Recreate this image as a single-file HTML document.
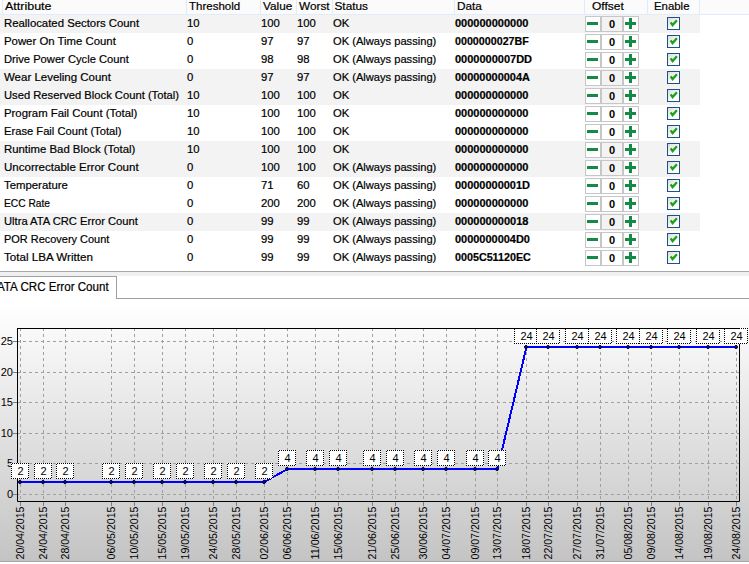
<!DOCTYPE html><html><head><meta charset="utf-8"><style>
html,body{margin:0;padding:0;}
body{width:749px;height:564px;overflow:hidden;position:relative;background:#fff;font-family:"Liberation Sans",sans-serif;color:#000;}
.a{position:absolute;}
.t{position:absolute;font-size:11.3px;line-height:14px;white-space:nowrap;-webkit-text-stroke:0.2px #000;}
.h{position:absolute;font-size:11.8px;line-height:14px;white-space:nowrap;-webkit-text-stroke:0.2px #000;}
.b{font-weight:bold;font-size:11px;}
.sep{position:absolute;top:0;width:1px;height:14px;background:#e2ebf8;}
.row{position:absolute;left:0;width:700px;height:18px;}
.g{background:#f3f3f3;}
.cell{position:absolute;height:16px;border:1px solid #c6c6c6;box-sizing:border-box;background:#fff;}
.mid{background:transparent;font-weight:bold;font-size:11px;text-align:center;line-height:14px;}
.cb{position:absolute;width:13px;height:13px;box-sizing:border-box;border:1px solid #1f5088;background:linear-gradient(135deg,#dcdcdc,#fff 70%);}
</style></head><body>

<div class="a" style="left:0;top:0;width:749px;height:14px;background:#fbfbfb"></div>
<div class="sep" style="left:2px"></div>
<div class="sep" style="left:186px"></div>
<div class="sep" style="left:260px"></div>
<div class="sep" style="left:296px"></div>
<div class="sep" style="left:332px"></div>
<div class="sep" style="left:454px"></div>
<div class="sep" style="left:584px"></div>
<div class="sep" style="left:647px"></div>
<div class="sep" style="left:699px"></div>
<div class="a" style="left:0;top:14px;width:749px;height:1px;background:#e2ebf8"></div>
<div class="h" style="left:5px;top:-1px;transform:scaleX(1.058);transform-origin:0 0">Attribute</div>
<div class="h" style="left:189px;top:-1px;transform:scaleX(0.976);transform-origin:0 0">Threshold</div>
<div class="h" style="left:263px;top:-1px">Value</div>
<div class="h" style="left:299px;top:-1px">Worst</div>
<div class="h" style="left:334.5px;top:-1px">Status</div>
<div class="h" style="left:457px;top:-1px">Data</div>
<div class="h" style="left:591.5px;top:-1px;transform:scaleX(1.02);transform-origin:0 0">Offset</div>
<div class="h" style="left:654px;top:-1px;transform:scaleX(0.966);transform-origin:0 0">Enable</div>
<div class="row g" style="top:15px"></div>
<div class="t" style="left:3.5px;top:16px;transform:scaleX(1.0052);transform-origin:0 0">Reallocated Sectors Count</div>
<div class="t" style="left:187px;top:16px">10</div>
<div class="t" style="left:261px;top:16px">100</div>
<div class="t" style="left:297px;top:16px">100</div>
<div class="t" style="left:333px;top:16px">OK</div>
<div class="t b" style="left:455px;top:16px">000000000000</div>
<div class="cell" style="left:585px;top:16px;width:16px"><div class="a" style="left:1px;top:5px;width:11px;height:3px;background:#148a46"></div></div>
<div class="cell mid" style="left:601px;top:16px;width:22px;background:#f3f3f3">0</div>
<div class="cell" style="left:623px;top:16px;width:16px"><div class="a" style="left:1px;top:5px;width:11px;height:3px;background:#148a46"></div><div class="a" style="left:5px;top:1px;width:3px;height:11px;background:#148a46"></div></div>
<div class="cb" style="left:667px;top:17px"><svg class="a" style="left:0;top:0" width="11" height="11" viewBox="0 0 11 11"><path d="M2.7 4.3 L4.6 7.1 L8.9 2.2" fill="none" stroke="#17a317" stroke-width="2.2"/></svg></div>
<div class="row" style="top:33px"></div>
<div class="t" style="left:3.5px;top:34px;transform:scaleX(1.0063);transform-origin:0 0">Power On Time Count</div>
<div class="t" style="left:187px;top:34px">0</div>
<div class="t" style="left:261px;top:34px">97</div>
<div class="t" style="left:297px;top:34px">97</div>
<div class="t" style="left:333px;top:34px;transform:scaleX(0.9854);transform-origin:0 0">OK (Always passing)</div>
<div class="t b" style="left:455px;top:34px;transform:scaleX(0.9732);transform-origin:0 0">0000000027BF</div>
<div class="cell" style="left:585px;top:34px;width:16px"><div class="a" style="left:1px;top:5px;width:11px;height:3px;background:#148a46"></div></div>
<div class="cell mid" style="left:601px;top:34px;width:22px;background:#fff">0</div>
<div class="cell" style="left:623px;top:34px;width:16px"><div class="a" style="left:1px;top:5px;width:11px;height:3px;background:#148a46"></div><div class="a" style="left:5px;top:1px;width:3px;height:11px;background:#148a46"></div></div>
<div class="cb" style="left:667px;top:35px"><svg class="a" style="left:0;top:0" width="11" height="11" viewBox="0 0 11 11"><path d="M2.7 4.3 L4.6 7.1 L8.9 2.2" fill="none" stroke="#17a317" stroke-width="2.2"/></svg></div>
<div class="row" style="top:51px"></div>
<div class="t" style="left:3.5px;top:52px;transform:scaleX(0.9888);transform-origin:0 0">Drive Power Cycle Count</div>
<div class="t" style="left:187px;top:52px">0</div>
<div class="t" style="left:261px;top:52px">98</div>
<div class="t" style="left:297px;top:52px">98</div>
<div class="t" style="left:333px;top:52px;transform:scaleX(0.9854);transform-origin:0 0">OK (Always passing)</div>
<div class="t b" style="left:455px;top:52px">0000000007DD</div>
<div class="cell" style="left:585px;top:52px;width:16px"><div class="a" style="left:1px;top:5px;width:11px;height:3px;background:#148a46"></div></div>
<div class="cell mid" style="left:601px;top:52px;width:22px;background:#fff">0</div>
<div class="cell" style="left:623px;top:52px;width:16px"><div class="a" style="left:1px;top:5px;width:11px;height:3px;background:#148a46"></div><div class="a" style="left:5px;top:1px;width:3px;height:11px;background:#148a46"></div></div>
<div class="cb" style="left:667px;top:53px"><svg class="a" style="left:0;top:0" width="11" height="11" viewBox="0 0 11 11"><path d="M2.7 4.3 L4.6 7.1 L8.9 2.2" fill="none" stroke="#17a317" stroke-width="2.2"/></svg></div>
<div class="row g" style="top:69px"></div>
<div class="t" style="left:3.5px;top:70px;transform:scaleX(1.0153);transform-origin:0 0">Wear Leveling Count</div>
<div class="t" style="left:187px;top:70px">0</div>
<div class="t" style="left:261px;top:70px">97</div>
<div class="t" style="left:297px;top:70px">97</div>
<div class="t" style="left:333px;top:70px;transform:scaleX(0.9854);transform-origin:0 0">OK (Always passing)</div>
<div class="t b" style="left:455px;top:70px;transform:scaleX(0.9959);transform-origin:0 0">00000000004A</div>
<div class="cell" style="left:585px;top:70px;width:16px"><div class="a" style="left:1px;top:5px;width:11px;height:3px;background:#148a46"></div></div>
<div class="cell mid" style="left:601px;top:70px;width:22px;background:#f3f3f3">0</div>
<div class="cell" style="left:623px;top:70px;width:16px"><div class="a" style="left:1px;top:5px;width:11px;height:3px;background:#148a46"></div><div class="a" style="left:5px;top:1px;width:3px;height:11px;background:#148a46"></div></div>
<div class="cb" style="left:667px;top:71px"><svg class="a" style="left:0;top:0" width="11" height="11" viewBox="0 0 11 11"><path d="M2.7 4.3 L4.6 7.1 L8.9 2.2" fill="none" stroke="#17a317" stroke-width="2.2"/></svg></div>
<div class="row g" style="top:87px"></div>
<div class="t" style="left:3.5px;top:88px;transform:scaleX(0.9920);transform-origin:0 0">Used Reserved Block Count (Total)</div>
<div class="t" style="left:187px;top:88px">10</div>
<div class="t" style="left:261px;top:88px">100</div>
<div class="t" style="left:297px;top:88px">100</div>
<div class="t" style="left:333px;top:88px">OK</div>
<div class="t b" style="left:455px;top:88px">000000000000</div>
<div class="cell" style="left:585px;top:88px;width:16px"><div class="a" style="left:1px;top:5px;width:11px;height:3px;background:#148a46"></div></div>
<div class="cell mid" style="left:601px;top:88px;width:22px;background:#f3f3f3">0</div>
<div class="cell" style="left:623px;top:88px;width:16px"><div class="a" style="left:1px;top:5px;width:11px;height:3px;background:#148a46"></div><div class="a" style="left:5px;top:1px;width:3px;height:11px;background:#148a46"></div></div>
<div class="cb" style="left:667px;top:89px"><svg class="a" style="left:0;top:0" width="11" height="11" viewBox="0 0 11 11"><path d="M2.7 4.3 L4.6 7.1 L8.9 2.2" fill="none" stroke="#17a317" stroke-width="2.2"/></svg></div>
<div class="row" style="top:105px"></div>
<div class="t" style="left:3.5px;top:106px;transform:scaleX(1.0068);transform-origin:0 0">Program Fail Count (Total)</div>
<div class="t" style="left:187px;top:106px">10</div>
<div class="t" style="left:261px;top:106px">100</div>
<div class="t" style="left:297px;top:106px">100</div>
<div class="t" style="left:333px;top:106px">OK</div>
<div class="t b" style="left:455px;top:106px">000000000000</div>
<div class="cell" style="left:585px;top:106px;width:16px"><div class="a" style="left:1px;top:5px;width:11px;height:3px;background:#148a46"></div></div>
<div class="cell mid" style="left:601px;top:106px;width:22px;background:#fff">0</div>
<div class="cell" style="left:623px;top:106px;width:16px"><div class="a" style="left:1px;top:5px;width:11px;height:3px;background:#148a46"></div><div class="a" style="left:5px;top:1px;width:3px;height:11px;background:#148a46"></div></div>
<div class="cb" style="left:667px;top:107px"><svg class="a" style="left:0;top:0" width="11" height="11" viewBox="0 0 11 11"><path d="M2.7 4.3 L4.6 7.1 L8.9 2.2" fill="none" stroke="#17a317" stroke-width="2.2"/></svg></div>
<div class="row" style="top:123px"></div>
<div class="t" style="left:3.5px;top:124px;transform:scaleX(0.9898);transform-origin:0 0">Erase Fail Count (Total)</div>
<div class="t" style="left:187px;top:124px">10</div>
<div class="t" style="left:261px;top:124px">100</div>
<div class="t" style="left:297px;top:124px">100</div>
<div class="t" style="left:333px;top:124px">OK</div>
<div class="t b" style="left:455px;top:124px">000000000000</div>
<div class="cell" style="left:585px;top:124px;width:16px"><div class="a" style="left:1px;top:5px;width:11px;height:3px;background:#148a46"></div></div>
<div class="cell mid" style="left:601px;top:124px;width:22px;background:#fff">0</div>
<div class="cell" style="left:623px;top:124px;width:16px"><div class="a" style="left:1px;top:5px;width:11px;height:3px;background:#148a46"></div><div class="a" style="left:5px;top:1px;width:3px;height:11px;background:#148a46"></div></div>
<div class="cb" style="left:667px;top:125px"><svg class="a" style="left:0;top:0" width="11" height="11" viewBox="0 0 11 11"><path d="M2.7 4.3 L4.6 7.1 L8.9 2.2" fill="none" stroke="#17a317" stroke-width="2.2"/></svg></div>
<div class="row g" style="top:141px"></div>
<div class="t" style="left:3.5px;top:142px;transform:scaleX(1.0062);transform-origin:0 0">Runtime Bad Block (Total)</div>
<div class="t" style="left:187px;top:142px">10</div>
<div class="t" style="left:261px;top:142px">100</div>
<div class="t" style="left:297px;top:142px">100</div>
<div class="t" style="left:333px;top:142px">OK</div>
<div class="t b" style="left:455px;top:142px">000000000000</div>
<div class="cell" style="left:585px;top:142px;width:16px"><div class="a" style="left:1px;top:5px;width:11px;height:3px;background:#148a46"></div></div>
<div class="cell mid" style="left:601px;top:142px;width:22px;background:#f3f3f3">0</div>
<div class="cell" style="left:623px;top:142px;width:16px"><div class="a" style="left:1px;top:5px;width:11px;height:3px;background:#148a46"></div><div class="a" style="left:5px;top:1px;width:3px;height:11px;background:#148a46"></div></div>
<div class="cb" style="left:667px;top:143px"><svg class="a" style="left:0;top:0" width="11" height="11" viewBox="0 0 11 11"><path d="M2.7 4.3 L4.6 7.1 L8.9 2.2" fill="none" stroke="#17a317" stroke-width="2.2"/></svg></div>
<div class="row g" style="top:159px"></div>
<div class="t" style="left:3.5px;top:160px;transform:scaleX(1.0213);transform-origin:0 0">Uncorrectable Error Count</div>
<div class="t" style="left:187px;top:160px">0</div>
<div class="t" style="left:261px;top:160px">100</div>
<div class="t" style="left:297px;top:160px">100</div>
<div class="t" style="left:333px;top:160px;transform:scaleX(0.9854);transform-origin:0 0">OK (Always passing)</div>
<div class="t b" style="left:455px;top:160px">000000000000</div>
<div class="cell" style="left:585px;top:160px;width:16px"><div class="a" style="left:1px;top:5px;width:11px;height:3px;background:#148a46"></div></div>
<div class="cell mid" style="left:601px;top:160px;width:22px;background:#f3f3f3">0</div>
<div class="cell" style="left:623px;top:160px;width:16px"><div class="a" style="left:1px;top:5px;width:11px;height:3px;background:#148a46"></div><div class="a" style="left:5px;top:1px;width:3px;height:11px;background:#148a46"></div></div>
<div class="cb" style="left:667px;top:161px"><svg class="a" style="left:0;top:0" width="11" height="11" viewBox="0 0 11 11"><path d="M2.7 4.3 L4.6 7.1 L8.9 2.2" fill="none" stroke="#17a317" stroke-width="2.2"/></svg></div>
<div class="row" style="top:177px"></div>
<div class="t" style="left:3.5px;top:178px;transform:scaleX(1.0064);transform-origin:0 0">Temperature</div>
<div class="t" style="left:187px;top:178px">0</div>
<div class="t" style="left:261px;top:178px">71</div>
<div class="t" style="left:297px;top:178px">60</div>
<div class="t" style="left:333px;top:178px;transform:scaleX(0.9854);transform-origin:0 0">OK (Always passing)</div>
<div class="t b" style="left:455px;top:178px;transform:scaleX(0.9959);transform-origin:0 0">00000000001D</div>
<div class="cell" style="left:585px;top:178px;width:16px"><div class="a" style="left:1px;top:5px;width:11px;height:3px;background:#148a46"></div></div>
<div class="cell mid" style="left:601px;top:178px;width:22px;background:#fff">0</div>
<div class="cell" style="left:623px;top:178px;width:16px"><div class="a" style="left:1px;top:5px;width:11px;height:3px;background:#148a46"></div><div class="a" style="left:5px;top:1px;width:3px;height:11px;background:#148a46"></div></div>
<div class="cb" style="left:667px;top:179px"><svg class="a" style="left:0;top:0" width="11" height="11" viewBox="0 0 11 11"><path d="M2.7 4.3 L4.6 7.1 L8.9 2.2" fill="none" stroke="#17a317" stroke-width="2.2"/></svg></div>
<div class="row" style="top:195px"></div>
<div class="t" style="left:3.5px;top:196px;transform:scaleX(0.9051);transform-origin:0 0">ECC Rate</div>
<div class="t" style="left:187px;top:196px">0</div>
<div class="t" style="left:261px;top:196px">200</div>
<div class="t" style="left:297px;top:196px">200</div>
<div class="t" style="left:333px;top:196px;transform:scaleX(0.9854);transform-origin:0 0">OK (Always passing)</div>
<div class="t b" style="left:455px;top:196px">000000000000</div>
<div class="cell" style="left:585px;top:196px;width:16px"><div class="a" style="left:1px;top:5px;width:11px;height:3px;background:#148a46"></div></div>
<div class="cell mid" style="left:601px;top:196px;width:22px;background:#fff">0</div>
<div class="cell" style="left:623px;top:196px;width:16px"><div class="a" style="left:1px;top:5px;width:11px;height:3px;background:#148a46"></div><div class="a" style="left:5px;top:1px;width:3px;height:11px;background:#148a46"></div></div>
<div class="cb" style="left:667px;top:197px"><svg class="a" style="left:0;top:0" width="11" height="11" viewBox="0 0 11 11"><path d="M2.7 4.3 L4.6 7.1 L8.9 2.2" fill="none" stroke="#17a317" stroke-width="2.2"/></svg></div>
<div class="row g" style="top:213px"></div>
<div class="t" style="left:3.5px;top:214px;transform:scaleX(0.9903);transform-origin:0 0">Ultra ATA CRC Error Count</div>
<div class="t" style="left:187px;top:214px">0</div>
<div class="t" style="left:261px;top:214px">99</div>
<div class="t" style="left:297px;top:214px">99</div>
<div class="t" style="left:333px;top:214px;transform:scaleX(0.9854);transform-origin:0 0">OK (Always passing)</div>
<div class="t b" style="left:455px;top:214px">000000000018</div>
<div class="cell" style="left:585px;top:214px;width:16px"><div class="a" style="left:1px;top:5px;width:11px;height:3px;background:#148a46"></div></div>
<div class="cell mid" style="left:601px;top:214px;width:22px;background:#f3f3f3">0</div>
<div class="cell" style="left:623px;top:214px;width:16px"><div class="a" style="left:1px;top:5px;width:11px;height:3px;background:#148a46"></div><div class="a" style="left:5px;top:1px;width:3px;height:11px;background:#148a46"></div></div>
<div class="cb" style="left:667px;top:215px"><svg class="a" style="left:0;top:0" width="11" height="11" viewBox="0 0 11 11"><path d="M2.7 4.3 L4.6 7.1 L8.9 2.2" fill="none" stroke="#17a317" stroke-width="2.2"/></svg></div>
<div class="row" style="top:231px"></div>
<div class="t" style="left:3.5px;top:232px;transform:scaleX(0.9693);transform-origin:0 0">POR Recovery Count</div>
<div class="t" style="left:187px;top:232px">0</div>
<div class="t" style="left:261px;top:232px">99</div>
<div class="t" style="left:297px;top:232px">99</div>
<div class="t" style="left:333px;top:232px;transform:scaleX(0.9854);transform-origin:0 0">OK (Always passing)</div>
<div class="t b" style="left:455px;top:232px;transform:scaleX(0.9959);transform-origin:0 0">0000000004D0</div>
<div class="cell" style="left:585px;top:232px;width:16px"><div class="a" style="left:1px;top:5px;width:11px;height:3px;background:#148a46"></div></div>
<div class="cell mid" style="left:601px;top:232px;width:22px;background:#fff">0</div>
<div class="cell" style="left:623px;top:232px;width:16px"><div class="a" style="left:1px;top:5px;width:11px;height:3px;background:#148a46"></div><div class="a" style="left:5px;top:1px;width:3px;height:11px;background:#148a46"></div></div>
<div class="cb" style="left:667px;top:233px"><svg class="a" style="left:0;top:0" width="11" height="11" viewBox="0 0 11 11"><path d="M2.7 4.3 L4.6 7.1 L8.9 2.2" fill="none" stroke="#17a317" stroke-width="2.2"/></svg></div>
<div class="row" style="top:249px"></div>
<div class="t" style="left:3.5px;top:250px;transform:scaleX(1.0281);transform-origin:0 0">Total LBA Written</div>
<div class="t" style="left:187px;top:250px">0</div>
<div class="t" style="left:261px;top:250px">99</div>
<div class="t" style="left:297px;top:250px">99</div>
<div class="t" style="left:333px;top:250px;transform:scaleX(0.9854);transform-origin:0 0">OK (Always passing)</div>
<div class="t b" style="left:455px;top:250px;transform:scaleX(0.9762);transform-origin:0 0">0005C51120EC</div>
<div class="cell" style="left:585px;top:250px;width:16px"><div class="a" style="left:1px;top:5px;width:11px;height:3px;background:#148a46"></div></div>
<div class="cell mid" style="left:601px;top:250px;width:22px;background:#fff">0</div>
<div class="cell" style="left:623px;top:250px;width:16px"><div class="a" style="left:1px;top:5px;width:11px;height:3px;background:#148a46"></div><div class="a" style="left:5px;top:1px;width:3px;height:11px;background:#148a46"></div></div>
<div class="cb" style="left:667px;top:251px"><svg class="a" style="left:0;top:0" width="11" height="11" viewBox="0 0 11 11"><path d="M2.7 4.3 L4.6 7.1 L8.9 2.2" fill="none" stroke="#17a317" stroke-width="2.2"/></svg></div>
<div class="a" style="left:0;top:271px;width:749px;height:1px;background:#a9a9a9"></div>
<div class="a" style="left:0;top:272px;width:749px;height:4px;background:#f0f0f0"></div>
<div class="a" style="left:0;top:276px;width:749px;height:23px;background:#fff"></div>
<div class="a" style="left:0;top:276px;width:116px;height:1px;background:#a0a0a0"></div>
<div class="a" style="left:116px;top:276px;width:1px;height:23px;background:#a0a0a0"></div>
<div class="a" style="left:116px;top:298px;width:633px;height:1px;background:#a0a0a0"></div>
<div class="h" style="left:-3px;top:279px;font-size:11.6px;transform:scaleY(1.08);transform-origin:0 0">ATA CRC Error Count</div>
<svg class="a" style="left:0;top:0" width="749" height="564" viewBox="0 0 749 564" font-family="Liberation Sans" font-size="11">
<defs><pattern id="dot" x="0" y="0" width="2" height="2" patternUnits="userSpaceOnUse"><rect x="1" y="0" width="1" height="1" fill="#000"/><rect x="0" y="1" width="1" height="1" fill="#000"/></pattern><linearGradient id="bg" x1="0" y1="0" x2="0" y2="1"><stop offset="0" stop-color="#ffffff"/><stop offset="1" stop-color="#c4c4c4"/></linearGradient></defs>
<rect x="0" y="299" width="749" height="6" fill="#fff"/>
<rect x="0" y="305" width="749" height="256" fill="url(#bg)"/>
<rect x="0" y="561" width="749" height="1" fill="#a8a8a8"/>
<line x1="17" y1="494.5" x2="739" y2="494.5" stroke="#a0a0a0" stroke-width="1" stroke-dasharray="3 3"/>
<line x1="13" y1="494.5" x2="17" y2="494.5" stroke="#808080" stroke-width="1"/>
<text x="13" y="498" text-anchor="end">0</text>
<line x1="17" y1="463.5" x2="739" y2="463.5" stroke="#a0a0a0" stroke-width="1" stroke-dasharray="3 3"/>
<line x1="13" y1="463.5" x2="17" y2="463.5" stroke="#808080" stroke-width="1"/>
<text x="13" y="467" text-anchor="end">5</text>
<line x1="17" y1="433.5" x2="739" y2="433.5" stroke="#a0a0a0" stroke-width="1" stroke-dasharray="3 3"/>
<line x1="13" y1="433.5" x2="17" y2="433.5" stroke="#808080" stroke-width="1"/>
<text x="13" y="437" text-anchor="end">10</text>
<line x1="17" y1="402.5" x2="739" y2="402.5" stroke="#a0a0a0" stroke-width="1" stroke-dasharray="3 3"/>
<line x1="13" y1="402.5" x2="17" y2="402.5" stroke="#808080" stroke-width="1"/>
<text x="13" y="406" text-anchor="end">15</text>
<line x1="17" y1="372.5" x2="739" y2="372.5" stroke="#a0a0a0" stroke-width="1" stroke-dasharray="3 3"/>
<line x1="13" y1="372.5" x2="17" y2="372.5" stroke="#808080" stroke-width="1"/>
<text x="13" y="376" text-anchor="end">20</text>
<line x1="17" y1="341.5" x2="739" y2="341.5" stroke="#a0a0a0" stroke-width="1" stroke-dasharray="3 3"/>
<line x1="13" y1="341.5" x2="17" y2="341.5" stroke="#808080" stroke-width="1"/>
<text x="13" y="345" text-anchor="end">25</text>
<line x1="20.5" y1="328" x2="20.5" y2="501" stroke="#a0a0a0" stroke-width="1" stroke-dasharray="3 3"/>
<line x1="20.5" y1="501" x2="20.5" y2="506" stroke="#808080" stroke-width="1"/>
<line x1="43.5" y1="328" x2="43.5" y2="501" stroke="#a0a0a0" stroke-width="1" stroke-dasharray="3 3"/>
<line x1="43.5" y1="501" x2="43.5" y2="506" stroke="#808080" stroke-width="1"/>
<line x1="65.5" y1="328" x2="65.5" y2="501" stroke="#a0a0a0" stroke-width="1" stroke-dasharray="3 3"/>
<line x1="65.5" y1="501" x2="65.5" y2="506" stroke="#808080" stroke-width="1"/>
<line x1="111.5" y1="328" x2="111.5" y2="501" stroke="#a0a0a0" stroke-width="1" stroke-dasharray="3 3"/>
<line x1="111.5" y1="501" x2="111.5" y2="506" stroke="#808080" stroke-width="1"/>
<line x1="134.5" y1="328" x2="134.5" y2="501" stroke="#a0a0a0" stroke-width="1" stroke-dasharray="3 3"/>
<line x1="134.5" y1="501" x2="134.5" y2="506" stroke="#808080" stroke-width="1"/>
<line x1="162.5" y1="328" x2="162.5" y2="501" stroke="#a0a0a0" stroke-width="1" stroke-dasharray="3 3"/>
<line x1="162.5" y1="501" x2="162.5" y2="506" stroke="#808080" stroke-width="1"/>
<line x1="185.5" y1="328" x2="185.5" y2="501" stroke="#a0a0a0" stroke-width="1" stroke-dasharray="3 3"/>
<line x1="185.5" y1="501" x2="185.5" y2="506" stroke="#808080" stroke-width="1"/>
<line x1="213.5" y1="328" x2="213.5" y2="501" stroke="#a0a0a0" stroke-width="1" stroke-dasharray="3 3"/>
<line x1="213.5" y1="501" x2="213.5" y2="506" stroke="#808080" stroke-width="1"/>
<line x1="236.5" y1="328" x2="236.5" y2="501" stroke="#a0a0a0" stroke-width="1" stroke-dasharray="3 3"/>
<line x1="236.5" y1="501" x2="236.5" y2="506" stroke="#808080" stroke-width="1"/>
<line x1="264.5" y1="328" x2="264.5" y2="501" stroke="#a0a0a0" stroke-width="1" stroke-dasharray="3 3"/>
<line x1="264.5" y1="501" x2="264.5" y2="506" stroke="#808080" stroke-width="1"/>
<line x1="287.5" y1="328" x2="287.5" y2="501" stroke="#a0a0a0" stroke-width="1" stroke-dasharray="3 3"/>
<line x1="287.5" y1="501" x2="287.5" y2="506" stroke="#808080" stroke-width="1"/>
<line x1="315.5" y1="328" x2="315.5" y2="501" stroke="#a0a0a0" stroke-width="1" stroke-dasharray="3 3"/>
<line x1="315.5" y1="501" x2="315.5" y2="506" stroke="#808080" stroke-width="1"/>
<line x1="338.5" y1="328" x2="338.5" y2="501" stroke="#a0a0a0" stroke-width="1" stroke-dasharray="3 3"/>
<line x1="338.5" y1="501" x2="338.5" y2="506" stroke="#808080" stroke-width="1"/>
<line x1="372.5" y1="328" x2="372.5" y2="501" stroke="#a0a0a0" stroke-width="1" stroke-dasharray="3 3"/>
<line x1="372.5" y1="501" x2="372.5" y2="506" stroke="#808080" stroke-width="1"/>
<line x1="395.5" y1="328" x2="395.5" y2="501" stroke="#a0a0a0" stroke-width="1" stroke-dasharray="3 3"/>
<line x1="395.5" y1="501" x2="395.5" y2="506" stroke="#808080" stroke-width="1"/>
<line x1="423.5" y1="328" x2="423.5" y2="501" stroke="#a0a0a0" stroke-width="1" stroke-dasharray="3 3"/>
<line x1="423.5" y1="501" x2="423.5" y2="506" stroke="#808080" stroke-width="1"/>
<line x1="446.5" y1="328" x2="446.5" y2="501" stroke="#a0a0a0" stroke-width="1" stroke-dasharray="3 3"/>
<line x1="446.5" y1="501" x2="446.5" y2="506" stroke="#808080" stroke-width="1"/>
<line x1="475.5" y1="328" x2="475.5" y2="501" stroke="#a0a0a0" stroke-width="1" stroke-dasharray="3 3"/>
<line x1="475.5" y1="501" x2="475.5" y2="506" stroke="#808080" stroke-width="1"/>
<line x1="497.5" y1="328" x2="497.5" y2="501" stroke="#a0a0a0" stroke-width="1" stroke-dasharray="3 3"/>
<line x1="497.5" y1="501" x2="497.5" y2="506" stroke="#808080" stroke-width="1"/>
<line x1="526.5" y1="328" x2="526.5" y2="501" stroke="#a0a0a0" stroke-width="1" stroke-dasharray="3 3"/>
<line x1="526.5" y1="501" x2="526.5" y2="506" stroke="#808080" stroke-width="1"/>
<line x1="548.5" y1="328" x2="548.5" y2="501" stroke="#a0a0a0" stroke-width="1" stroke-dasharray="3 3"/>
<line x1="548.5" y1="501" x2="548.5" y2="506" stroke="#808080" stroke-width="1"/>
<line x1="577.5" y1="328" x2="577.5" y2="501" stroke="#a0a0a0" stroke-width="1" stroke-dasharray="3 3"/>
<line x1="577.5" y1="501" x2="577.5" y2="506" stroke="#808080" stroke-width="1"/>
<line x1="600.5" y1="328" x2="600.5" y2="501" stroke="#a0a0a0" stroke-width="1" stroke-dasharray="3 3"/>
<line x1="600.5" y1="501" x2="600.5" y2="506" stroke="#808080" stroke-width="1"/>
<line x1="628.5" y1="328" x2="628.5" y2="501" stroke="#a0a0a0" stroke-width="1" stroke-dasharray="3 3"/>
<line x1="628.5" y1="501" x2="628.5" y2="506" stroke="#808080" stroke-width="1"/>
<line x1="651.5" y1="328" x2="651.5" y2="501" stroke="#a0a0a0" stroke-width="1" stroke-dasharray="3 3"/>
<line x1="651.5" y1="501" x2="651.5" y2="506" stroke="#808080" stroke-width="1"/>
<line x1="679.5" y1="328" x2="679.5" y2="501" stroke="#a0a0a0" stroke-width="1" stroke-dasharray="3 3"/>
<line x1="679.5" y1="501" x2="679.5" y2="506" stroke="#808080" stroke-width="1"/>
<line x1="708.5" y1="328" x2="708.5" y2="501" stroke="#a0a0a0" stroke-width="1" stroke-dasharray="3 3"/>
<line x1="708.5" y1="501" x2="708.5" y2="506" stroke="#808080" stroke-width="1"/>
<line x1="736.5" y1="328" x2="736.5" y2="501" stroke="#a0a0a0" stroke-width="1" stroke-dasharray="3 3"/>
<line x1="736.5" y1="501" x2="736.5" y2="506" stroke="#808080" stroke-width="1"/>
<path d="M17.5 328 V501.5 H739.5 V328" fill="none" stroke="#000" stroke-width="1"/>
<polyline points="20.5,482 43.5,482 65.5,482 111.5,482 134.5,482 162.5,482 185.5,482 213.5,482 236.5,482 264.5,482 287.5,469 315.5,469 338.5,469 372.5,469 395.5,469 423.5,469 446.5,469 475.5,469 497.5,469 526.5,347 548.5,347 577.5,347 600.5,347 628.5,347 651.5,347 679.5,347 708.5,347 736.5,347" fill="none" stroke="#0000ff" stroke-width="2" shape-rendering="crispEdges"/>
<circle cx="20" cy="482" r="1.5" fill="#0000ff" stroke="#000010" stroke-width="1"/>
<circle cx="43" cy="482" r="1.5" fill="#0000ff" stroke="#000010" stroke-width="1"/>
<circle cx="65" cy="482" r="1.5" fill="#0000ff" stroke="#000010" stroke-width="1"/>
<circle cx="111" cy="482" r="1.5" fill="#0000ff" stroke="#000010" stroke-width="1"/>
<circle cx="134" cy="482" r="1.5" fill="#0000ff" stroke="#000010" stroke-width="1"/>
<circle cx="162" cy="482" r="1.5" fill="#0000ff" stroke="#000010" stroke-width="1"/>
<circle cx="185" cy="482" r="1.5" fill="#0000ff" stroke="#000010" stroke-width="1"/>
<circle cx="213" cy="482" r="1.5" fill="#0000ff" stroke="#000010" stroke-width="1"/>
<circle cx="236" cy="482" r="1.5" fill="#0000ff" stroke="#000010" stroke-width="1"/>
<circle cx="264" cy="482" r="1.5" fill="#0000ff" stroke="#000010" stroke-width="1"/>
<circle cx="287" cy="469" r="1.5" fill="#0000ff" stroke="#000010" stroke-width="1"/>
<circle cx="315" cy="469" r="1.5" fill="#0000ff" stroke="#000010" stroke-width="1"/>
<circle cx="338" cy="469" r="1.5" fill="#0000ff" stroke="#000010" stroke-width="1"/>
<circle cx="372" cy="469" r="1.5" fill="#0000ff" stroke="#000010" stroke-width="1"/>
<circle cx="395" cy="469" r="1.5" fill="#0000ff" stroke="#000010" stroke-width="1"/>
<circle cx="423" cy="469" r="1.5" fill="#0000ff" stroke="#000010" stroke-width="1"/>
<circle cx="446" cy="469" r="1.5" fill="#0000ff" stroke="#000010" stroke-width="1"/>
<circle cx="475" cy="469" r="1.5" fill="#0000ff" stroke="#000010" stroke-width="1"/>
<circle cx="497" cy="469" r="1.5" fill="#0000ff" stroke="#000010" stroke-width="1"/>
<circle cx="526" cy="347" r="1.5" fill="#0000ff" stroke="#000010" stroke-width="1"/>
<circle cx="548" cy="347" r="1.5" fill="#0000ff" stroke="#000010" stroke-width="1"/>
<circle cx="577" cy="347" r="1.5" fill="#0000ff" stroke="#000010" stroke-width="1"/>
<circle cx="600" cy="347" r="1.5" fill="#0000ff" stroke="#000010" stroke-width="1"/>
<circle cx="628" cy="347" r="1.5" fill="#0000ff" stroke="#000010" stroke-width="1"/>
<circle cx="651" cy="347" r="1.5" fill="#0000ff" stroke="#000010" stroke-width="1"/>
<circle cx="679" cy="347" r="1.5" fill="#0000ff" stroke="#000010" stroke-width="1"/>
<circle cx="708" cy="347" r="1.5" fill="#0000ff" stroke="#000010" stroke-width="1"/>
<circle cx="736" cy="347" r="1.5" fill="#0000ff" stroke="#000010" stroke-width="1"/>
<g transform="translate(11,463)"><rect x="0" y="0" width="18" height="16" fill="#fff"/><path d="M0 0h18v16h-18z M1 1v14h16v-14z" fill="url(#dot)" fill-rule="evenodd"/></g>
<text x="20.5" y="475" text-anchor="middle">2</text>
<g transform="translate(34,463)"><rect x="0" y="0" width="18" height="16" fill="#fff"/><path d="M0 0h18v16h-18z M1 1v14h16v-14z" fill="url(#dot)" fill-rule="evenodd"/></g>
<text x="43.5" y="475" text-anchor="middle">2</text>
<g transform="translate(56,463)"><rect x="0" y="0" width="18" height="16" fill="#fff"/><path d="M0 0h18v16h-18z M1 1v14h16v-14z" fill="url(#dot)" fill-rule="evenodd"/></g>
<text x="65.5" y="475" text-anchor="middle">2</text>
<g transform="translate(102,463)"><rect x="0" y="0" width="18" height="16" fill="#fff"/><path d="M0 0h18v16h-18z M1 1v14h16v-14z" fill="url(#dot)" fill-rule="evenodd"/></g>
<text x="111.5" y="475" text-anchor="middle">2</text>
<g transform="translate(125,463)"><rect x="0" y="0" width="18" height="16" fill="#fff"/><path d="M0 0h18v16h-18z M1 1v14h16v-14z" fill="url(#dot)" fill-rule="evenodd"/></g>
<text x="134.5" y="475" text-anchor="middle">2</text>
<g transform="translate(153,463)"><rect x="0" y="0" width="18" height="16" fill="#fff"/><path d="M0 0h18v16h-18z M1 1v14h16v-14z" fill="url(#dot)" fill-rule="evenodd"/></g>
<text x="162.5" y="475" text-anchor="middle">2</text>
<g transform="translate(176,463)"><rect x="0" y="0" width="18" height="16" fill="#fff"/><path d="M0 0h18v16h-18z M1 1v14h16v-14z" fill="url(#dot)" fill-rule="evenodd"/></g>
<text x="185.5" y="475" text-anchor="middle">2</text>
<g transform="translate(204,463)"><rect x="0" y="0" width="18" height="16" fill="#fff"/><path d="M0 0h18v16h-18z M1 1v14h16v-14z" fill="url(#dot)" fill-rule="evenodd"/></g>
<text x="213.5" y="475" text-anchor="middle">2</text>
<g transform="translate(227,463)"><rect x="0" y="0" width="18" height="16" fill="#fff"/><path d="M0 0h18v16h-18z M1 1v14h16v-14z" fill="url(#dot)" fill-rule="evenodd"/></g>
<text x="236.5" y="475" text-anchor="middle">2</text>
<g transform="translate(255,463)"><rect x="0" y="0" width="18" height="16" fill="#fff"/><path d="M0 0h18v16h-18z M1 1v14h16v-14z" fill="url(#dot)" fill-rule="evenodd"/></g>
<text x="264.5" y="475" text-anchor="middle">2</text>
<g transform="translate(278,450)"><rect x="0" y="0" width="18" height="16" fill="#fff"/><path d="M0 0h18v16h-18z M1 1v14h16v-14z" fill="url(#dot)" fill-rule="evenodd"/></g>
<text x="287.5" y="462" text-anchor="middle">4</text>
<g transform="translate(306,450)"><rect x="0" y="0" width="18" height="16" fill="#fff"/><path d="M0 0h18v16h-18z M1 1v14h16v-14z" fill="url(#dot)" fill-rule="evenodd"/></g>
<text x="315.5" y="462" text-anchor="middle">4</text>
<g transform="translate(329,450)"><rect x="0" y="0" width="18" height="16" fill="#fff"/><path d="M0 0h18v16h-18z M1 1v14h16v-14z" fill="url(#dot)" fill-rule="evenodd"/></g>
<text x="338.5" y="462" text-anchor="middle">4</text>
<g transform="translate(363,450)"><rect x="0" y="0" width="18" height="16" fill="#fff"/><path d="M0 0h18v16h-18z M1 1v14h16v-14z" fill="url(#dot)" fill-rule="evenodd"/></g>
<text x="372.5" y="462" text-anchor="middle">4</text>
<g transform="translate(386,450)"><rect x="0" y="0" width="18" height="16" fill="#fff"/><path d="M0 0h18v16h-18z M1 1v14h16v-14z" fill="url(#dot)" fill-rule="evenodd"/></g>
<text x="395.5" y="462" text-anchor="middle">4</text>
<g transform="translate(414,450)"><rect x="0" y="0" width="18" height="16" fill="#fff"/><path d="M0 0h18v16h-18z M1 1v14h16v-14z" fill="url(#dot)" fill-rule="evenodd"/></g>
<text x="423.5" y="462" text-anchor="middle">4</text>
<g transform="translate(437,450)"><rect x="0" y="0" width="18" height="16" fill="#fff"/><path d="M0 0h18v16h-18z M1 1v14h16v-14z" fill="url(#dot)" fill-rule="evenodd"/></g>
<text x="446.5" y="462" text-anchor="middle">4</text>
<g transform="translate(466,450)"><rect x="0" y="0" width="18" height="16" fill="#fff"/><path d="M0 0h18v16h-18z M1 1v14h16v-14z" fill="url(#dot)" fill-rule="evenodd"/></g>
<text x="475.5" y="462" text-anchor="middle">4</text>
<g transform="translate(488,450)"><rect x="0" y="0" width="18" height="16" fill="#fff"/><path d="M0 0h18v16h-18z M1 1v14h16v-14z" fill="url(#dot)" fill-rule="evenodd"/></g>
<text x="497.5" y="462" text-anchor="middle">4</text>
<g transform="translate(514,328)"><rect x="0" y="0" width="24" height="16" fill="#fff"/><path d="M0 0h24v16h-24z M1 1v14h22v-14z" fill="url(#dot)" fill-rule="evenodd"/></g>
<text x="526.5" y="340" text-anchor="middle">24</text>
<g transform="translate(536,328)"><rect x="0" y="0" width="24" height="16" fill="#fff"/><path d="M0 0h24v16h-24z M1 1v14h22v-14z" fill="url(#dot)" fill-rule="evenodd"/></g>
<text x="548.5" y="340" text-anchor="middle">24</text>
<g transform="translate(565,328)"><rect x="0" y="0" width="24" height="16" fill="#fff"/><path d="M0 0h24v16h-24z M1 1v14h22v-14z" fill="url(#dot)" fill-rule="evenodd"/></g>
<text x="577.5" y="340" text-anchor="middle">24</text>
<g transform="translate(588,328)"><rect x="0" y="0" width="24" height="16" fill="#fff"/><path d="M0 0h24v16h-24z M1 1v14h22v-14z" fill="url(#dot)" fill-rule="evenodd"/></g>
<text x="600.5" y="340" text-anchor="middle">24</text>
<g transform="translate(616,328)"><rect x="0" y="0" width="24" height="16" fill="#fff"/><path d="M0 0h24v16h-24z M1 1v14h22v-14z" fill="url(#dot)" fill-rule="evenodd"/></g>
<text x="628.5" y="340" text-anchor="middle">24</text>
<g transform="translate(639,328)"><rect x="0" y="0" width="24" height="16" fill="#fff"/><path d="M0 0h24v16h-24z M1 1v14h22v-14z" fill="url(#dot)" fill-rule="evenodd"/></g>
<text x="651.5" y="340" text-anchor="middle">24</text>
<g transform="translate(667,328)"><rect x="0" y="0" width="24" height="16" fill="#fff"/><path d="M0 0h24v16h-24z M1 1v14h22v-14z" fill="url(#dot)" fill-rule="evenodd"/></g>
<text x="679.5" y="340" text-anchor="middle">24</text>
<g transform="translate(696,328)"><rect x="0" y="0" width="24" height="16" fill="#fff"/><path d="M0 0h24v16h-24z M1 1v14h22v-14z" fill="url(#dot)" fill-rule="evenodd"/></g>
<text x="708.5" y="340" text-anchor="middle">24</text>
<g transform="translate(724,328)"><rect x="0" y="0" width="24" height="16" fill="#fff"/><path d="M0 0h24v16h-24z M1 1v14h22v-14z" fill="url(#dot)" fill-rule="evenodd"/></g>
<text x="736.5" y="340" text-anchor="middle">24</text>
<rect x="17" y="328" width="723" height="1" fill="#000"/>
<text transform="translate(23.8,559.5) rotate(-90)" font-size="11.2" textLength="53" lengthAdjust="spacingAndGlyphs">20/04/2015</text>
<text transform="translate(46.8,559.5) rotate(-90)" font-size="11.2" textLength="53" lengthAdjust="spacingAndGlyphs">24/04/2015</text>
<text transform="translate(68.8,559.5) rotate(-90)" font-size="11.2" textLength="53" lengthAdjust="spacingAndGlyphs">28/04/2015</text>
<text transform="translate(114.8,559.5) rotate(-90)" font-size="11.2" textLength="53" lengthAdjust="spacingAndGlyphs">06/05/2015</text>
<text transform="translate(137.8,559.5) rotate(-90)" font-size="11.2" textLength="53" lengthAdjust="spacingAndGlyphs">10/05/2015</text>
<text transform="translate(165.8,559.5) rotate(-90)" font-size="11.2" textLength="53" lengthAdjust="spacingAndGlyphs">15/05/2015</text>
<text transform="translate(188.8,559.5) rotate(-90)" font-size="11.2" textLength="53" lengthAdjust="spacingAndGlyphs">19/05/2015</text>
<text transform="translate(216.8,559.5) rotate(-90)" font-size="11.2" textLength="53" lengthAdjust="spacingAndGlyphs">24/05/2015</text>
<text transform="translate(239.8,559.5) rotate(-90)" font-size="11.2" textLength="53" lengthAdjust="spacingAndGlyphs">28/05/2015</text>
<text transform="translate(267.8,559.5) rotate(-90)" font-size="11.2" textLength="53" lengthAdjust="spacingAndGlyphs">02/06/2015</text>
<text transform="translate(290.8,559.5) rotate(-90)" font-size="11.2" textLength="53" lengthAdjust="spacingAndGlyphs">06/06/2015</text>
<text transform="translate(318.8,559.5) rotate(-90)" font-size="11.2" textLength="53" lengthAdjust="spacingAndGlyphs">11/06/2015</text>
<text transform="translate(341.8,559.5) rotate(-90)" font-size="11.2" textLength="53" lengthAdjust="spacingAndGlyphs">15/06/2015</text>
<text transform="translate(375.8,559.5) rotate(-90)" font-size="11.2" textLength="53" lengthAdjust="spacingAndGlyphs">21/06/2015</text>
<text transform="translate(398.8,559.5) rotate(-90)" font-size="11.2" textLength="53" lengthAdjust="spacingAndGlyphs">25/06/2015</text>
<text transform="translate(426.8,559.5) rotate(-90)" font-size="11.2" textLength="53" lengthAdjust="spacingAndGlyphs">30/06/2015</text>
<text transform="translate(449.8,559.5) rotate(-90)" font-size="11.2" textLength="53" lengthAdjust="spacingAndGlyphs">04/07/2015</text>
<text transform="translate(478.8,559.5) rotate(-90)" font-size="11.2" textLength="53" lengthAdjust="spacingAndGlyphs">09/07/2015</text>
<text transform="translate(500.8,559.5) rotate(-90)" font-size="11.2" textLength="53" lengthAdjust="spacingAndGlyphs">13/07/2015</text>
<text transform="translate(529.8,559.5) rotate(-90)" font-size="11.2" textLength="53" lengthAdjust="spacingAndGlyphs">18/07/2015</text>
<text transform="translate(551.8,559.5) rotate(-90)" font-size="11.2" textLength="53" lengthAdjust="spacingAndGlyphs">22/07/2015</text>
<text transform="translate(580.8,559.5) rotate(-90)" font-size="11.2" textLength="53" lengthAdjust="spacingAndGlyphs">27/07/2015</text>
<text transform="translate(603.8,559.5) rotate(-90)" font-size="11.2" textLength="53" lengthAdjust="spacingAndGlyphs">31/07/2015</text>
<text transform="translate(631.8,559.5) rotate(-90)" font-size="11.2" textLength="53" lengthAdjust="spacingAndGlyphs">05/08/2015</text>
<text transform="translate(654.8,559.5) rotate(-90)" font-size="11.2" textLength="53" lengthAdjust="spacingAndGlyphs">09/08/2015</text>
<text transform="translate(682.8,559.5) rotate(-90)" font-size="11.2" textLength="53" lengthAdjust="spacingAndGlyphs">14/08/2015</text>
<text transform="translate(711.8,559.5) rotate(-90)" font-size="11.2" textLength="53" lengthAdjust="spacingAndGlyphs">19/08/2015</text>
<text transform="translate(739.8,559.5) rotate(-90)" font-size="11.2" textLength="53" lengthAdjust="spacingAndGlyphs">24/08/2015</text>
</svg>
</body></html>
